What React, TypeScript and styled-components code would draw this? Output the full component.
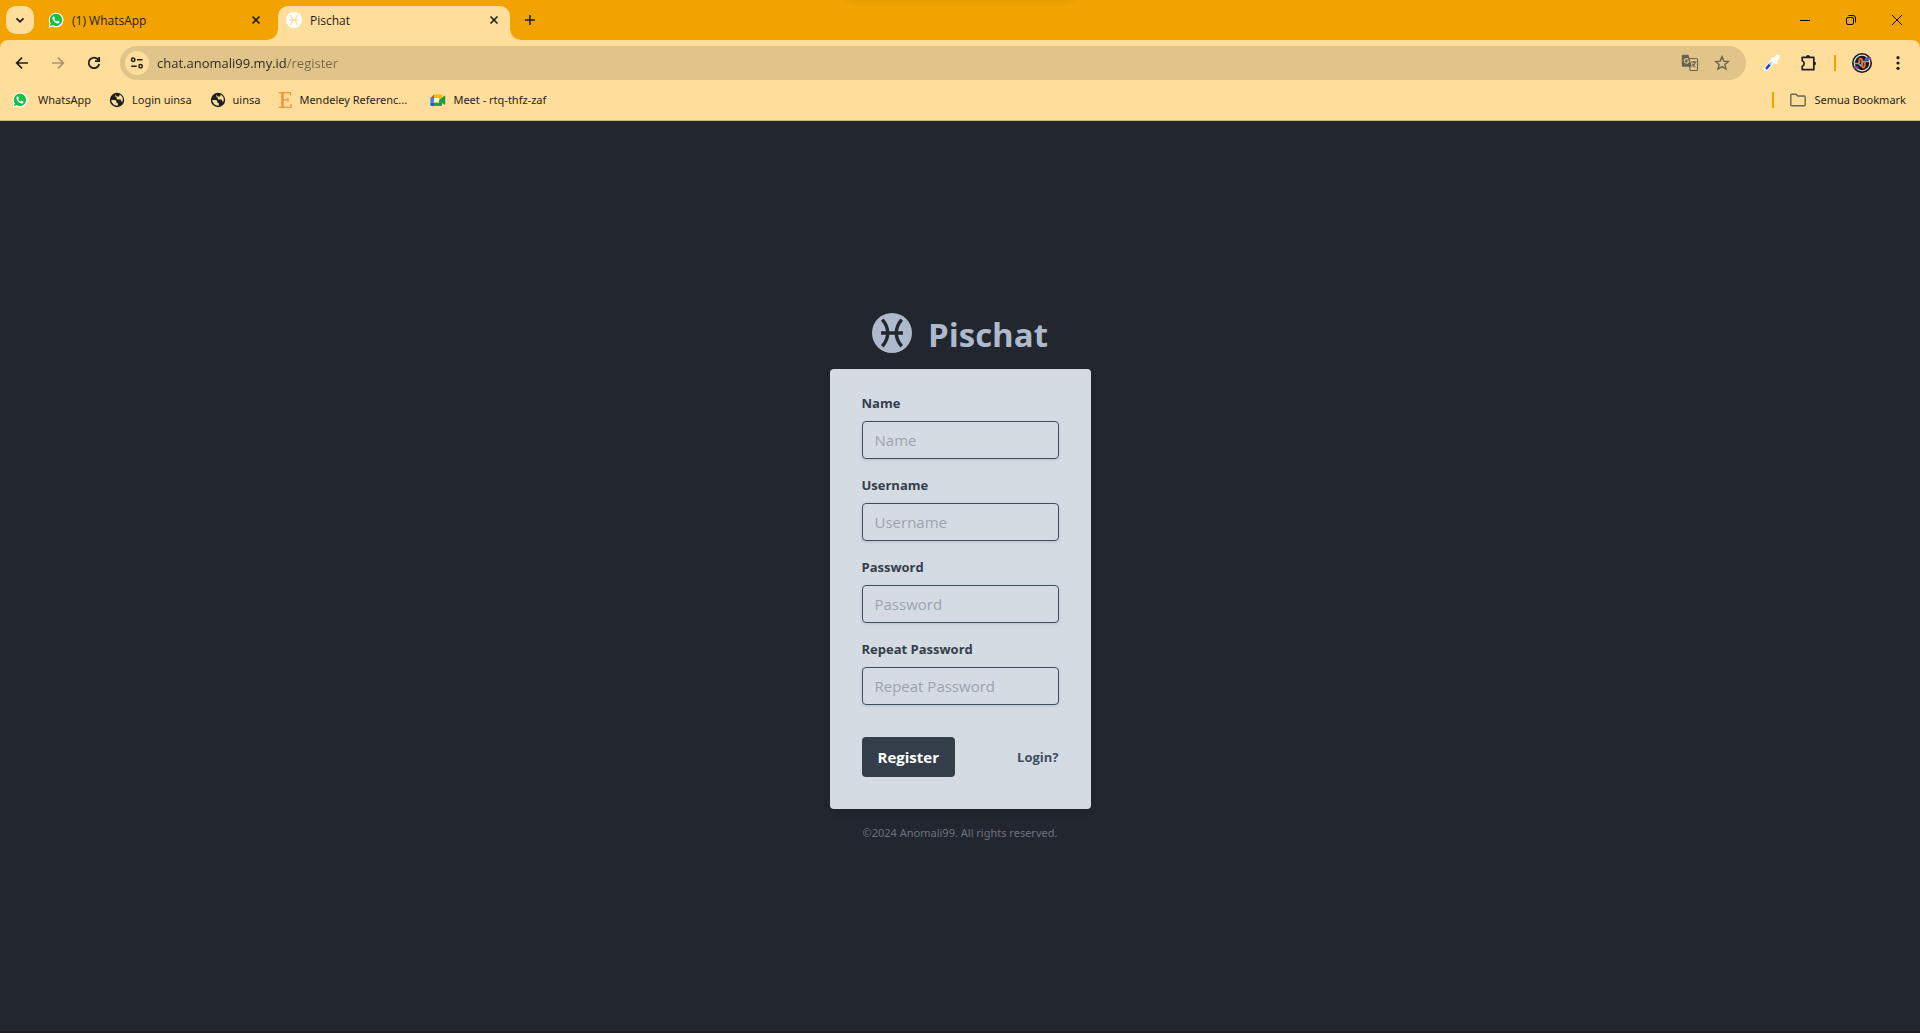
import React from 'react';
import styled, { createGlobalStyle } from 'styled-components';

const amber = '#f2a300';
const cream = '#ffdd9b';
const ink = '#1f1f1f';
const smallText = "'Segoe UI', 'Noto Sans', sans-serif";

const GlobalStyle = createGlobalStyle`
  *, *::before, *::after { box-sizing: border-box; }
  body { margin: 0; font-family: 'Segoe UI', 'Open Sans', 'Noto Sans', sans-serif; background: #22262e; }
  button, input { font: inherit; color: inherit; }
  button { border: 0; background: none; padding: 0; cursor: pointer; }
  svg { display: block; flex: none; }
`;

const Window = styled.div`
  display: flex;
  flex-direction: column;
  min-height: 100vh;
`;

const TabStrip = styled.div`
  position: relative;
  display: flex;
  gap: 6px;
  height: 40px;
  padding: 6px 0 0 6px;
  background: ${amber};
  font-size: 12px;
  color: ${ink};

  &::before {
    content: '';
    position: absolute;
    top: -8px;
    left: 50%;
    width: 220px;
    height: 6px;
    margin-left: -110px;
    box-shadow: 0 0 8px rgba(90, 60, 0, 0.25);
  }
`;

const StripButton = styled.button<{ $filled?: boolean }>`
  display: grid;
  place-items: center;
  width: 28px;
  height: 28px;
  border-radius: 10px;
  background: ${(p) => (p.$filled ? cream : 'transparent')};
`;

const Tab = styled.div<{ $active?: boolean }>`
  position: relative;
  display: flex;
  align-items: center;
  gap: 8px;
  width: 232px;
  height: 34px;
  padding: 0 8px 6px;
  border-radius: 10px 10px 0 0;
  background: ${(p) => (p.$active ? cream : 'transparent')};

  &::before, &::after {
    content: '';
    display: ${(p) => (p.$active ? 'block' : 'none')};
    position: absolute;
    bottom: 0;
    width: 10px;
    height: 10px;
  }
  &::before {
    right: 100%;
    background: radial-gradient(circle at 0 0, transparent 9px, ${cream} 10px);
  }
  &::after {
    left: 100%;
    background: radial-gradient(circle at 100% 0, transparent 9px, ${cream} 10px);
  }
`;

const TabTitle = styled.span`
  flex: 1;
  white-space: nowrap;
`;

const WindowControls = styled.div`
  display: flex;
  height: 28px;
  margin-left: auto;
`;

const WindowButton = styled.button`
  display: grid;
  place-items: center;
  width: 46px;
`;

const ChromeBase = styled.div`
  background: ${amber};
`;

const ChromePanel = styled.div`
  background: ${cream};
  border-radius: 8px 8px 0 0;
  border-bottom: 1px solid #d0b680;
  color: ${ink};
`;

const Toolbar = styled.div`
  display: flex;
  align-items: center;
  padding: 6px 4px 0;
`;

const ToolButton = styled.button`
  display: grid;
  place-items: center;
  width: 36px;
  height: 34px;
`;

const Omnibox = styled.div`
  display: flex;
  flex: 1;
  align-items: center;
  height: 34px;
  margin: 0 8px;
  padding: 0 8px 0 5px;
  border-radius: 17px;
  background: #e1c48a;
`;

const SiteInfo = styled.button`
  display: grid;
  place-items: center;
  width: 24px;
  height: 24px;
  margin-right: 8px;
  border-radius: 50%;
  background: ${cream};
`;

/* The host is dark, the path after it is muted. */
const Address = styled.input`
  flex: 1;
  min-width: 0;
  border: 0;
  padding: 0;
  outline: none;
  font-size: 13px;
  line-height: 20px;
  background: linear-gradient(90deg, #2b261d 130px, #756746 130px);
  -webkit-background-clip: text;
  background-clip: text;
  -webkit-text-fill-color: transparent;
`;

const OmniAction = styled.button`
  display: grid;
  place-items: center;
  width: 32px;
  height: 32px;
`;

const Divider = styled.span`
  width: 2px;
  height: 16px;
  margin: 0 8px;
  background: ${amber};
`;

const Bookmarks = styled.nav`
  display: flex;
  align-items: center;
  gap: 18px;
  height: 40px;
  padding: 0 14px 0 12px;
  font-family: ${smallText};
  font-size: 11px;
  line-height: 16px;
`;

const Bookmark = styled.a<{ $gap?: number; $truncated?: boolean }>`
  display: flex;
  align-items: center;
  gap: ${(p) => p.$gap ?? 7}px;
  min-width: ${(p) => (p.$truncated ? '134px' : '0')};
  color: inherit;
  text-decoration: none;
  white-space: nowrap;
`;

const AllBookmarks = styled.div`
  display: flex;
  align-items: center;
  gap: 8px;
  margin-left: auto;
`;

const Page = styled.main`
  display: flex;
  flex: 1;
  flex-direction: column;
  align-items: center;
  justify-content: center;
  background: #22262e;
  box-shadow: inset 0 -2px #1f1b20;
`;

const Brand = styled.h1`
  display: flex;
  align-items: center;
  gap: 16px;
  margin: 0 0 16px;
  color: #aebacb;
  font-size: 33px;
  line-height: 36px;
  font-weight: 700;
`;

const BrandName = styled.span`
  padding-top: 4px;
`;

const Card = styled.form`
  width: 261px;
  padding: 24px 32px 32px;
  border-radius: 4px;
  background: #d5dbe3;
  box-shadow: 0 4px 6px rgba(0, 0, 0, 0.1);
`;

const Field = styled.div`
  margin-bottom: 16px;
`;

const Label = styled.label`
  display: block;
  margin-bottom: 8px;
  color: #343e4b;
  font-size: 13px;
  line-height: 20px;
  font-weight: 700;
`;

const TextBox = styled.input`
  display: block;
  width: 100%;
  height: 38px;
  padding: 0 12px;
  border: 1px solid #404e61;
  border-radius: 4px;
  background: transparent;
  box-shadow: 0 1px 3px rgba(0, 0, 0, 0.12);
  color: #343e4b;
  font-size: 15px;

  &::placeholder { color: #9ca3af; opacity: 1; }
`;

const Actions = styled.div`
  display: flex;
  align-items: center;
  justify-content: space-between;
  margin-top: 32px;
`;

const Submit = styled.button`
  height: 40px;
  padding: 0 16px;
  border-radius: 4px;
  background: #343e4b;
  color: #fff;
  font-size: 15px;
  font-weight: 700;
`;

const LoginLink = styled.a`
  color: #404e61;
  font-size: 13px;
  font-weight: 700;
  text-decoration: none;
`;

const Copyright = styled.p`
  margin: 16px 0 0;
  color: #6b7280;
  font-family: ${smallText};
  font-size: 11px;
  line-height: 16px;
`;

const WhatsAppIcon = () => (
  <svg width="16" height="16" viewBox="0 0 16 16">
    <path d="M.6 15.4l1.100-3.900A7.300 7.300 0 1 1 4.500 14.400z" fill="#fff" />
    <path d="M1.900 14.100l.8-2.900A6.200 6.200 0 1 1 4.900 13.300z" fill="#12c04b" />
    <path d="M5.700 4.500c-.5 0-1.200.6-1.200 1.700 0 1.900 2.900 5 5 5.200 1.200.1 2.100-.6 2.100-1.500 0-.3-.1-.4-.4-.5L9.800 8.700c-.3-.1-.4-.1-.6.2l-.6.7c-.9-.3-1.800-1.200-2.300-2.100l.5-.7c.1-.2.1-.3 0-.5l-.6-1.500c-.1-.2-.3-.3-.5-.3z" fill="#fff" />
  </svg>
);

const PiscesIcon = ({ size, disc, mark }: { size: number; disc: string; mark: string }) => (
  <svg width={size} height={size} viewBox="0 0 40 40">
    <circle cx="20" cy="20" r="20" fill={disc} />
    <path d="M10.300 6.700C17.500 15 17.500 25 10.300 33.300M29.700 6.700C22.500 15 22.500 25 29.700 33.300M9 20h22" fill="none" stroke={mark} strokeWidth="3.400" />
  </svg>
);

const CloseIcon = () => (
  <svg width="16" height="16" viewBox="0 0 16 16" stroke={ink} strokeWidth="1.600">
    <path d="M4.500 4.500l7 7M11.500 4.500l-7 7" />
  </svg>
);

const GlobeIcon = () => (
  <svg width="16" height="16" viewBox="0 0 16 16">
    <circle cx="8" cy="8" r="7.200" fill={ink} />
    <path d="M2.200 8.100h3.300c1.200 0 2 .8 2 2v.8h1.300v2.800A5.900 5.900 0 0 1 2.200 8.100zM6.300 2.400v1.500c0 .8.700 1.300 1.400 1.300v1.300c0 .7.6 1 1.200 1h1.900c.9 0 1.300.5 1.300 1.300v.6h1.400A5.900 5.900 0 0 0 10.500 2.600v.8c0 .8-.6 1.200-1.300 1.200H7.700" fill={cream} />
  </svg>
);

const ElsevierIcon = () => (
  <svg width="14" height="16" viewBox="0 0 14 16" fill="none" stroke="#f8923a">
    <path d="M.5.6h11.800v3M.5 15.400H13v-3.400M5 7.800h5M10 5.800v4" strokeWidth="1.300" />
    <path d="M4.500 1v14" strokeWidth="2.600" />
  </svg>
);

const MeetIcon = () => (
  <svg width="16" height="16" viewBox="0 0 16 16">
    <path d="M4 2.400V6H.4z" fill="#ea4335" />
    <path d="M.4 6H4v4.400H.4z" fill="#2684fc" />
    <path d="M.4 10.400H4V14H1.600A1.200 1.200 0 0 1 .4 12.800z" fill="#0066da" />
    <path d="M4 2.400h6.900c.7 0 1.200.5 1.200 1.200v2.600L9 8.200V6H4z" fill="#ffba00" />
    <path d="M4 10.400h5V8l3.100 2.300v2.500c0 .7-.5 1.200-1.200 1.200H4z" fill="#00ac47" />
    <path d="M4 6h5v4.400H4z" fill="#fff3dc" />
    <path d="M9 8.200l5-4.200c.5-.4 1.200-.1 1.200.5v7.400c0 .6-.7.900-1.200.5z" fill="#1e9a42" />
  </svg>
);

const TranslateIcon = () => (
  <svg width="18" height="18" viewBox="0 0 18 18">
    <path d="M7.500 4.500h8a1 1 0 0 1 1 1v10a1 1 0 0 1-1 1H9.200z" fill="none" stroke="#74664b" strokeWidth="1.200" />
    <path d="M2 .8h5.500l3.300 12H2a1.200 1.200 0 0 1-1.200-1.200V2A1.200 1.200 0 0 1 2 .8z" fill="#686158" />
    <path d="M7.200 5.300a2.300 2.300 0 1 0 .6 1.700H5.700" fill="none" stroke="#e1c48a" strokeWidth="1.200" />
    <path d="M10.300 8.200h4.900M12.700 7v1.200M14.300 8.200c-.4 2-1.400 3.300-2.700 4.200M11.300 9.700c.7 1.500 1.700 2.500 3 3.300" fill="none" stroke="#74664b" strokeWidth="1.200" />
  </svg>
);

const EyedropperIcon = () => (
  <svg width="18" height="18" viewBox="0 0 18 18" strokeLinecap="round">
    <path d="M3 15l7-8" stroke="#fff" strokeWidth="4.500" />
    <path d="M9 4.500l4.500 4.500" stroke="#fff" strokeWidth="2.500" />
    <path d="M11.500 6.500l3-3.500" stroke="#fff" strokeWidth="4.500" />
    <path d="M3.700 14.200l3-3.500" stroke="#2846b8" strokeWidth="2.600" />
    <path d="M7.200 10l1.300-1.500" stroke="#c3cbe6" strokeWidth="2" />
  </svg>
);

const PuzzleIcon = () => (
  <svg width="18" height="18" viewBox="0 0 18 18">
    <path d="M3.200 3.300h11.600v12.400H3.200v-3.400a3 3 0 0 0 0-5.600z" fill="none" stroke={ink} strokeWidth="1.700" strokeLinejoin="round" />
    <path d="M7 3a2 2 0 0 1 4 0zM15 7.500a2 2 0 0 1 0 4z" fill={ink} />
  </svg>
);

const AvatarIcon = () => (
  <svg width="20" height="20" viewBox="0 0 20 20" fill="none">
    <circle cx="10" cy="10" r="10" fill="#17171c" />
    <circle cx="10" cy="10" r="7.800" stroke="#e4ded4" strokeWidth="1.200" />
    <path d="M1.500 14.500h5M13 7l2-1.500h4" stroke="#8a3fb8" strokeWidth="2.600" />
    <path d="M2.500 10.500h4l2 2 3-4h5.500" stroke="#48c6b4" strokeWidth="1.500" />
    <path d="M7.300 10V7.500c0-2.500 2.700-2.500 2.700 0v5c0 2.500 2.700 2.500 2.700 0V9" stroke="#ee6a28" strokeWidth="1.900" />
  </svg>
);

const fields = [
  { id: 'name', label: 'Name', type: 'text' },
  { id: 'username', label: 'Username', type: 'text' },
  { id: 'password', label: 'Password', type: 'password' },
  { id: 'repeat', label: 'Repeat Password', type: 'password' },
];

export default function App() {
  return (
    <Window>
      <GlobalStyle />
      <TabStrip>
        <StripButton $filled aria-label="Search tabs">
          <svg width="12" height="12" viewBox="0 0 12 12" fill="none" stroke={ink} strokeWidth="1.800"><path d="M2.500 4.300L6 7.800l3.500-3.500" /></svg>
        </StripButton>
        <Tab>
          <WhatsAppIcon />
          <TabTitle>(1) WhatsApp</TabTitle>
          <button aria-label="Close WhatsApp tab"><CloseIcon /></button>
        </Tab>
        <Tab $active>
          <PiscesIcon size={16} disc="#fff" mark={cream} />
          <TabTitle>Pischat</TabTitle>
          <button aria-label="Close Pischat tab"><CloseIcon /></button>
        </Tab>
        <StripButton aria-label="New tab">
          <svg width="12" height="12" viewBox="0 0 12 12" stroke={ink} strokeWidth="1.600"><path d="M6 1v10M1 6h10" /></svg>
        </StripButton>
        <WindowControls>
          <WindowButton aria-label="Minimize">
            <svg width="10" height="10" viewBox="0 0 10 10" stroke="#000"><path d="M0 5.500h10" /></svg>
          </WindowButton>
          <WindowButton aria-label="Restore">
            <svg width="10" height="10" viewBox="0 0 10 10" fill="none" stroke="#000"><rect x=".5" y="2.500" width="7" height="7" rx="1.500" /><path d="M2.500.5H7A2.500 2.500 0 0 1 9.500 3v4.500" /></svg>
          </WindowButton>
          <WindowButton aria-label="Close window">
            <svg width="10" height="10" viewBox="0 0 10 10" stroke="#000"><path d="M0 0l10 10M10 0L0 10" /></svg>
          </WindowButton>
        </WindowControls>
      </TabStrip>

      <ChromeBase>
        <ChromePanel>
          <Toolbar>
            <ToolButton aria-label="Back">
              <svg width="16" height="16" viewBox="0 0 16 16" fill="none" stroke={ink} strokeWidth="1.700"><path d="M14 8H3M8 2.700L2.700 8 8 13.300" /></svg>
            </ToolButton>
            <ToolButton aria-label="Forward">
              <svg width="16" height="16" viewBox="0 0 16 16" fill="none" stroke="#a8946c" strokeWidth="1.700"><path d="M2 8h11M8 2.700L13.300 8 8 13.300" /></svg>
            </ToolButton>
            <ToolButton aria-label="Reload">
              <svg width="16" height="16" viewBox="0 0 16 16" fill="none" stroke={ink} strokeWidth="1.800"><path d="M13.200 9a5.300 5.300 0 1 1-1.100-4.500l1 1.100M13.200 2v4.200H9" /></svg>
            </ToolButton>
            <Omnibox>
              <SiteInfo aria-label="Site information">
                <svg width="14" height="14" viewBox="0 0 14 14" fill="none" stroke={ink} strokeWidth="1.500"><circle cx="3.200" cy="3.700" r="1.700" /><path d="M7 3.700h5.500M1.200 10.300h5.500" /><circle cx="10.600" cy="10.300" r="1.700" /></svg>
              </SiteInfo>
              <Address aria-label="Address" defaultValue="chat.anomali99.my.id/register" spellCheck={false} />
              <OmniAction aria-label="Translate"><TranslateIcon /></OmniAction>
              <OmniAction aria-label="Bookmark this page">
                <svg width="16" height="16" viewBox="0 0 16 16" fill="none" stroke="#6b604b" strokeWidth="1.400"><path d="M8 1.800l1.800 4.300 4.600.4-3.500 3 1.100 4.500L8 11.600 4 14l1.100-4.500-3.500-3 4.600-.4z" /></svg>
              </OmniAction>
            </Omnibox>
            <ToolButton aria-label="Color picker"><EyedropperIcon /></ToolButton>
            <ToolButton aria-label="Extensions"><PuzzleIcon /></ToolButton>
            <Divider />
            <ToolButton aria-label="Profile"><AvatarIcon /></ToolButton>
            <ToolButton aria-label="Menu">
              <svg width="16" height="16" viewBox="0 0 16 16" fill={ink}><circle cx="8" cy="2.700" r="1.600" /><circle cx="8" cy="8" r="1.600" /><circle cx="8" cy="13.300" r="1.600" /></svg>
            </ToolButton>
          </Toolbar>
          <Bookmarks aria-label="Bookmarks">
            <Bookmark href="#whatsapp" $gap={10}><WhatsAppIcon />WhatsApp</Bookmark>
            <Bookmark href="#login"><GlobeIcon />Login uinsa</Bookmark>
            <Bookmark href="#uinsa"><GlobeIcon />uinsa</Bookmark>
            <Bookmark href="#mendeley" $truncated><ElsevierIcon />Mendeley Referenc...</Bookmark>
            <Bookmark href="#meet"><MeetIcon />Meet - rtq-thfz-zaf</Bookmark>
            <AllBookmarks>
              <Divider />
              <Bookmark href="#all" $gap={8}>
                <svg width="16" height="16" viewBox="0 0 16 16" fill="none" stroke="#6b6453" strokeWidth="1.400"><path d="M.8 12.800V3.200c0-.6.4-1 1-1h4.300l1.700 1.800h6.400c.6 0 1 .4 1 1v7.800c0 .6-.4 1-1 1H1.800c-.6 0-1-.4-1-1z" /></svg>
                Semua Bookmark
              </Bookmark>
            </AllBookmarks>
          </Bookmarks>
        </ChromePanel>
      </ChromeBase>

      <Page>
        <Brand>
          <PiscesIcon size={40} disc="#aebacb" mark="#22262e" />
          <BrandName>Pischat</BrandName>
        </Brand>
        <Card>
          {fields.map((f) => (
            <Field key={f.id}>
              <Label htmlFor={f.id}>{f.label}</Label>
              <TextBox id={f.id} type={f.type} placeholder={f.label} />
            </Field>
          ))}
          <Actions>
            <Submit type="button">Register</Submit>
            <LoginLink href="#login-page">Login?</LoginLink>
          </Actions>
        </Card>
        <Copyright>©2024 Anomali99. All rights reserved.</Copyright>
      </Page>
    </Window>
  );
}
